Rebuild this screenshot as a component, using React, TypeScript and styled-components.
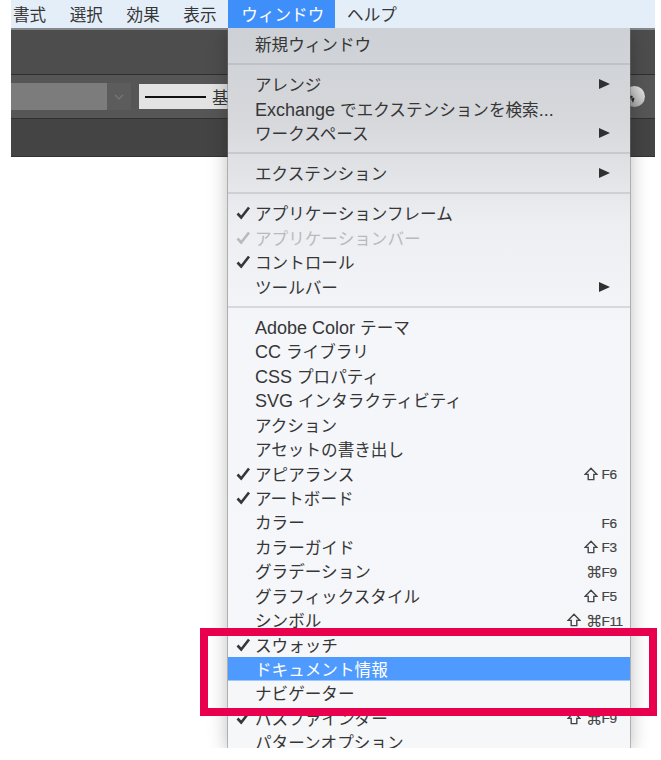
import React from 'react'
import styled, { createGlobalStyle } from 'styled-components'

type MenuEntry =
    | { kind: 'separator' }
    | {
          kind: 'item'
          label: string
          checked?: boolean
          disabled?: boolean
          active?: boolean
          submenu?: boolean
          shift?: boolean
          command?: boolean
          fkey?: string
      }

const item = (label: string, extra: object = {}): MenuEntry => ({ kind: 'item', label, ...extra })
const separator: MenuEntry = { kind: 'separator' }

const entries: MenuEntry[] = [
    item('新規ウィンドウ'),
    separator,
    item('アレンジ', { submenu: true }),
    item('Exchange でエクステンションを検索...'),
    item('ワークスペース', { submenu: true }),
    separator,
    item('エクステンション', { submenu: true }),
    separator,
    item('アプリケーションフレーム', { checked: true }),
    item('アプリケーションバー', { checked: true, disabled: true }),
    item('コントロール', { checked: true }),
    item('ツールバー', { submenu: true }),
    separator,
    item('Adobe Color テーマ'),
    item('CC ライブラリ'),
    item('CSS プロパティ'),
    item('SVG インタラクティビティ'),
    item('アクション'),
    item('アセットの書き出し'),
    item('アピアランス', { checked: true, shift: true, fkey: 'F6' }),
    item('アートボード', { checked: true }),
    item('カラー', { fkey: 'F6' }),
    item('カラーガイド', { shift: true, fkey: 'F3' }),
    item('グラデーション', { command: true, fkey: 'F9' }),
    item('グラフィックスタイル', { shift: true, fkey: 'F5' }),
    item('シンボル', { shift: true, command: true, fkey: 'F11' }),
    item('スウォッチ', { checked: true }),
    item('ドキュメント情報', { active: true }),
    item('ナビゲーター'),
    item('パスファインダー', { checked: true, shift: true, command: true, fkey: 'F9' }),
    item('パターンオプション'),
]

const topItems = ['書式', '選択', '効果', '表示', 'ウィンドウ', 'ヘルプ']

const GlobalStyle = createGlobalStyle`
    html, body {
        margin: 0;
        padding: 0;
        background: #ffffff;
    }
`

const Page = styled.div`
    position: relative;
    width: 661px;
    height: 760px;
    overflow: hidden;
    font-family: 'Noto Sans CJK JP', sans-serif;
    font-size: 16.6px;
    color: #363636;
`

const MenuBar = styled.div`
    display: flex;
    margin-left: 11px;
    padding-left: 2px;
    width: 642px;
    height: 28px;
    background: #e4eef8;
`

const TopItem = styled.div<{ $open?: boolean; $first?: boolean }>`
    display: flex;
    align-items: center;
    height: 28px;
    padding: 0 ${p => (p.$open ? '11px' : '11.8px')} 0 ${p => (p.$first ? '0' : p.$open ? '13px' : '11.8px')};
    background: ${p => (p.$open ? '#3f8ffb' : 'transparent')};
    color: ${p => (p.$open ? '#ffffff' : '#363636')};
`

const Workspace = styled.div`
    display: flex;
    flex-direction: column;
    margin-left: 11px;
    width: 644px;
    height: 129px;
    box-sizing: border-box;
    background: #444444;
    border-bottom: 1px solid #333333;
`

const ToolRowTop = styled.div`
    height: 44px;
    background: #4d4d4d;
    border-top: 2px solid #85898d;
    border-bottom: 1px solid #2f2f2f;
`

const ToolRowMiddle = styled.div`
    display: flex;
    align-items: center;
    justify-content: space-between;
    height: 43px;
    background: #565656;
    border-bottom: 1px solid #303030;
`

const ToolGroup = styled.div`
    display: flex;
    align-items: center;
`

const GreyField = styled.div`
    width: 96px;
    height: 27px;
    background: #7c7c7c;
`

const ChevronBox = styled.div`
    display: flex;
    align-items: center;
    justify-content: center;
    width: 24px;
    height: 27px;
    margin-right: 8px;
    background: #5c5c5c;
`

const StrokeField = styled.div`
    display: flex;
    align-items: center;
    gap: 6px;
    width: 89px;
    height: 25px;
    padding-left: 6px;
    box-sizing: border-box;
    background: #e3e3e3;
    white-space: nowrap;
`

const StrokeLine = styled.div`
    flex: none;
    width: 61px;
    height: 2px;
    background: #111111;
`

const ColorWheel = styled.svg`
    width: 21px;
    height: 21px;
    margin-right: 10px;
`

const Dropdown = styled.div`
    position: absolute;
    top: 28px;
    left: 228px;
    width: 402px;
    height: 720px;
    padding-top: 4px;
    box-sizing: border-box;
    overflow: hidden;
    background: linear-gradient(180deg, #cdd0d4 0%, #d6d8dc 13%, #eceef1 27%, #f4f6fa 42%, #f6f7f9 100%);
    box-shadow: 0 0 0 1px rgba(120, 120, 120, 0.45), 0 4px 18px rgba(0, 0, 0, 0.28);
    clip-path: inset(0 -30px 0 -30px);
`

const Row = styled.div<{ $active?: boolean; $disabled?: boolean }>`
    display: flex;
    align-items: center;
    height: 24.45px;
    box-sizing: border-box;
    white-space: nowrap;
    background: ${p => (p.$active ? '#4f9aff' : 'transparent')};
    border-bottom: ${p => (p.$active ? '1px solid #9cc8ff' : 'none')};
    color: ${p => (p.$active ? '#ffffff' : p.$disabled ? '#b9babd' : '#363636')};
`

const CheckCell = styled.div`
    display: flex;
    align-items: center;
    justify-content: flex-end;
    flex: none;
    width: 23px;
    margin-right: 4px;
`

const Label = styled.div`
    flex: 1;
`

const Latin = styled.span`
    font-family: 'Liberation Sans', sans-serif;
    font-size: 18px;
`

const Mods = styled.div`
    display: flex;
    align-items: center;
    justify-content: flex-end;
    gap: 3px;
    height: 16px;
`

const ShiftGlyph = styled.svg`
    flex: none;
    width: 14px;
    height: 14px;
    margin-right: 2px;
`

const CommandGlyph = styled.span`
    flex: none;
    width: 14px;
    padding-top: 4px;
    font-family: 'DejaVu Sans', sans-serif;
    font-size: 16.5px;
    line-height: 16px;
    color: #444444;
`

const FKey = styled.span`
    flex: none;
    width: 30px;
    padding: 2px 0 0 1.5px;
    box-sizing: border-box;
    font-family: 'Liberation Sans', sans-serif;
    font-size: 13.6px;
    letter-spacing: -0.4px;
    -webkit-text-stroke: 0.2px #444444;
    color: #444444;
`

const ArrowCell = styled.div`
    flex: none;
    display: flex;
    width: 31px;
`

const Arrow = styled.div`
    width: 0;
    height: 0;
    border-left: 11px solid #303030;
    border-top: 5.5px solid transparent;
    border-bottom: 5.5px solid transparent;
`

const Divider = styled.div`
    height: 15.7px;
    display: flex;
    align-items: center;
    &::after {
        content: '';
        flex: 1;
        height: 2px;
        background: rgba(150, 153, 158, 0.3);
    }
`

const Highlight = styled.div`
    position: absolute;
    top: 628px;
    left: 200px;
    width: 457px;
    height: 88px;
    box-sizing: border-box;
    border: 8px solid #e8004f;
`

const CheckIcon: React.FC<{ color: string }> = ({ color }) => (
    <svg width="15" height="14" viewBox="0 0 15 14">
        <path d="M1.5 7.5 L5.2 11.5 L13 1.5" fill="none" stroke={color} strokeWidth="2.6" />
    </svg>
)

const ShiftIcon: React.FC = () => (
    <ShiftGlyph viewBox="0 0 14 14">
        <path d="M7 1.2 L13 7.4 H9.8 V12.6 H4.2 V7.4 H1 Z" fill="none" stroke="#444444" strokeWidth="1.4" />
    </ShiftGlyph>
)

const Shortcut: React.FC<{ shift?: boolean; command?: boolean; fkey: string }> = ({ shift, command, fkey }) => (
    <>
        <Mods>
            {shift && <ShiftIcon />}
            {command && <CommandGlyph>⌘</CommandGlyph>}
        </Mods>
        <FKey>{fkey}</FKey>
    </>
)

// latin runs are set larger than the kana, as the mac menu font does
const renderLabel = (label: string) =>
    label.split(/([A-Za-z. ]+)/).map((part, i) => (i % 2 === 1 ? <Latin key={i}>{part}</Latin> : part))

const App: React.FC = () => {
    return (
        <Page>
            <GlobalStyle />
            <MenuBar>
                {topItems.map((name, i) => (
                    <TopItem key={name} $open={name === 'ウィンドウ'} $first={i === 0}>
                        {name}
                    </TopItem>
                ))}
            </MenuBar>
            <Workspace>
                <ToolRowTop />
                <ToolRowMiddle>
                    <ToolGroup>
                        <GreyField />
                        <ChevronBox>
                            <svg width="10" height="6" viewBox="0 0 10 6">
                                <path d="M1 1 L5 5 L9 1" fill="none" stroke="#777777" strokeWidth="1.2" />
                            </svg>
                        </ChevronBox>
                        <StrokeField>
                            <StrokeLine />基
                        </StrokeField>
                    </ToolGroup>
                    <ColorWheel viewBox="0 0 21 21">
                        <defs>
                            <linearGradient id="wheel" x1="0" y1="1" x2="1" y2="0">
                                <stop offset="0" stopColor="#8c8c8c" />
                                <stop offset="0.55" stopColor="#c4c4c4" />
                                <stop offset="1" stopColor="#ececec" />
                            </linearGradient>
                        </defs>
                        <circle cx="10.5" cy="10.5" r="10.5" fill="url(#wheel)" />
                        <path d="M3 11 L8 9.5 L9 11 L5 14 Z M7 13 L9.5 11.5 L10.5 12.5 L9 17 Z" fill="#2b2b2b" />
                    </ColorWheel>
                </ToolRowMiddle>
            </Workspace>
            <Dropdown>
                {entries.map((entry, i) => {
                    if (entry.kind === 'separator') return <Divider key={i} />
                    const textColor = entry.disabled ? '#b9babd' : '#363636'
                    return (
                        <Row key={i} $active={entry.active} $disabled={entry.disabled}>
                            <CheckCell>{entry.checked && <CheckIcon color={textColor} />}</CheckCell>
                            <Label>{renderLabel(entry.label)}</Label>
                            {entry.fkey && <Shortcut shift={entry.shift} command={entry.command} fkey={entry.fkey} />}
                            {entry.submenu && (
                                <ArrowCell>
                                    <Arrow />
                                </ArrowCell>
                            )}
                        </Row>
                    )
                })}
            </Dropdown>
            <Highlight />
        </Page>
    )
}

export default App
